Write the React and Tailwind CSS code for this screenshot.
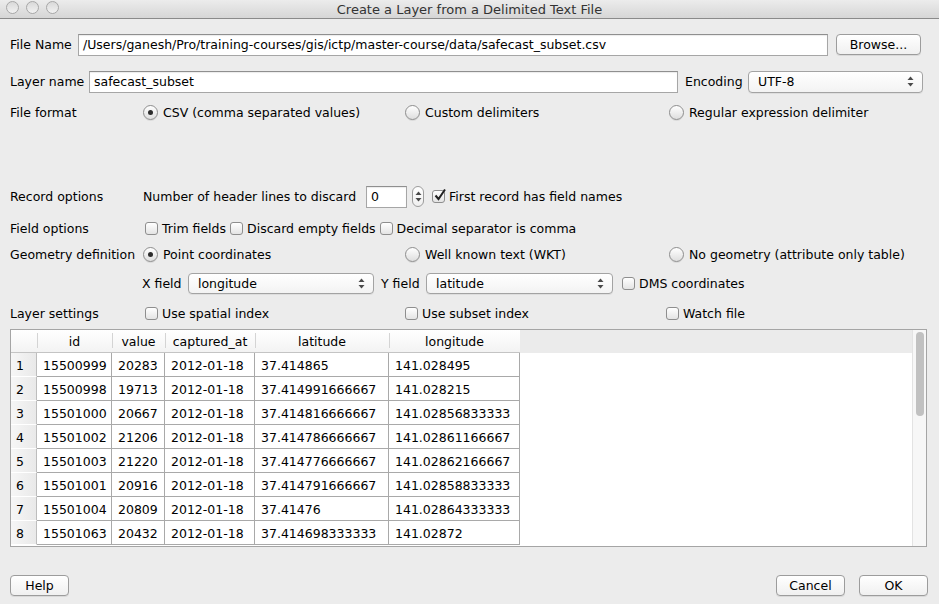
import React from "react";

const rows = [
  ["15500999", "20283", "2012-01-18", "37.414865", "141.028495"],
  ["15500998", "19713", "2012-01-18", "37.414991666667", "141.028215"],
  ["15501000", "20667", "2012-01-18", "37.414816666667", "141.02856833333"],
  ["15501002", "21206", "2012-01-18", "37.414786666667", "141.02861166667"],
  ["15501003", "21220", "2012-01-18", "37.414776666667", "141.02862166667"],
  ["15501001", "20916", "2012-01-18", "37.414791666667", "141.02858833333"],
  ["15501004", "20809", "2012-01-18", "37.41476", "141.02864333333"],
  ["15501063", "20432", "2012-01-18", "37.414698333333", "141.02872"],
];

const cols = [
  { name: "id", w: "w-[75px]" },
  { name: "value", w: "w-[53px]" },
  { name: "captured_at", w: "w-[90px]" },
  { name: "latitude", w: "w-[134px]" },
  { name: "longitude", w: "w-[131px]" },
];

function Radio({ checked, label }) {
  return (
    <div className="flex items-center">
      <span className="w-[15px] h-[15px] rounded-full border border-[#8e8e8e] bg-gradient-to-b from-white to-[#dedede] flex items-center justify-center shadow-[0_1px_0_rgba(0,0,0,0.08)]">
        {checked && <span className="w-[5px] h-[5px] rounded-full bg-[#2b2b2b]"></span>}
      </span>
      <span className="ml-[5px] pt-[2px]">{label}</span>
    </div>
  );
}

function Checkbox({ checked, label, className = "" }) {
  return (
    <div className={"flex items-center " + className}>
      <span className="relative w-[13px] h-[13px] rounded-[3px] border border-[#8e8e8e] bg-gradient-to-b from-white to-[#e4e4e4]">
        {checked && (
          <svg className="absolute -top-[3px] left-[0px]" width="14" height="14" viewBox="0 0 14 14">
            <path d="M2.5 7.5 L5.5 11 L12 1.5" fill="none" stroke="#222" strokeWidth="2" />
          </svg>
        )}
      </span>
      <span className="ml-[4px] pt-[2px]">{label}</span>
    </div>
  );
}

function Arrows() {
  return (
    <svg width="7" height="11" viewBox="0 0 7 11">
      <path d="M3.5 0.5 L6.5 4 L0.5 4 Z" fill="#4a4a4a" />
      <path d="M3.5 10.5 L6.5 7 L0.5 7 Z" fill="#4a4a4a" />
    </svg>
  );
}

function Select({ value, className }) {
  return (
    <div
      className={
        "flex items-center justify-between rounded-[4px] border border-[#a3a3a3] bg-gradient-to-b from-white to-[#f3f3f3] pl-[9px] pr-[8px] shadow-[0_1px_0_rgba(0,0,0,0.06)] " +
        className
      }
    >
      <span className="pt-[2px]">{value}</span>
      <Arrows />
    </div>
  );
}

function Button({ label, className }) {
  return (
    <div
      className={
        "flex items-center justify-center pt-[2px] rounded-[4px] border border-[#9c9c9c] bg-gradient-to-b from-white to-[#f0f0f0] shadow-[0_1px_0_rgba(0,0,0,0.08)] " +
        className
      }
    >
      {label}
    </div>
  );
}

function Input({ value, className }) {
  return (
    <div
      className={
        "flex items-center bg-white border border-[#a6a6a6] border-t-[#8f8f8f] pl-[4px] pt-[2px] shadow-[inset_0_1px_1px_rgba(0,0,0,0.08)] " +
        className
      }
    >
      {value}
    </div>
  );
}

function Label({ className, children }) {
  return <span className={"pt-[2px] " + className}>{children}</span>;
}

export default function App() {
  return (
    <div className="w-[939px] h-[604px] bg-[#ececec] text-[12.5px] text-black overflow-hidden font-['DejaVu_Sans',sans-serif] leading-none">
      {/* title bar */}
      <div className="relative h-[19px] bg-gradient-to-b from-[#ececec] to-[#d6d6d6] border-b border-[#8a8a8a] flex items-center justify-center">
        <div className="absolute left-[6px] top-[1px] flex gap-[7px]">
          {[0, 1, 2].map((i) => (
            <span
              key={i}
              className="w-[13px] h-[13px] rounded-full border border-[#a7a7a7] bg-gradient-to-b from-[#d9d9d9] to-[#f2f2f2]"
            ></span>
          ))}
        </div>
        <span className="text-[13px] text-[#333] pt-[1px]">Create a Layer from a Delimited Text File</span>
      </div>

      <div className="pl-[10px]">
        {/* file name */}
        <div className="flex items-center h-[23px] mt-[14px]">
          <Label className="w-[68px]">File Name</Label>
          <Input value="/Users/ganesh/Pro/training-courses/gis/ictp/master-course/data/safecast_subset.csv" className="w-[750px] h-[22px]" />
          <Button label="Browse..." className="ml-[8px] w-[85px] h-[21px]" />
        </div>

        {/* layer name */}
        <div className="flex items-center h-[23px] mt-[14px]">
          <Label className="w-[79px]">Layer name</Label>
          <Input value="safecast_subset" className="w-[589px] h-[22px]" />
          <Label className="ml-[7px] w-[63px]">Encoding</Label>
          <Select value="UTF-8" className="w-[175px] h-[22px]" />
        </div>

        {/* file format */}
        <div className="flex items-center h-[20px] mt-[9px]">
          <Label className="w-[133px]">File format</Label>
          <div className="w-[262px]">
            <Radio checked label="CSV (comma separated values)" />
          </div>
          <div className="w-[264px]">
            <Radio label="Custom delimiters" />
          </div>
          <Radio label="Regular expression delimiter" />
        </div>

        {/* record options */}
        <div className="flex items-center h-[23px] mt-[63px]">
          <Label className="w-[133px]">Record options</Label>
          <Label className="w-[223px]">Number of header lines to discard</Label>
          <Input value="0" className="w-[41px] h-[22px]" />
          <div className="ml-[5px] w-[12px] h-[21px] rounded-full border border-[#9c9c9c] bg-gradient-to-b from-white to-[#efefef] flex items-center justify-center">
            <Arrows />
          </div>
          <Checkbox checked label="First record has field names" className="ml-[8px]" />
        </div>

        {/* field options */}
        <div className="flex items-center h-[20px] mt-[10px]">
          <Label className="w-[135px]">Field options</Label>
          <Checkbox label="Trim fields" />
          <Checkbox label="Discard empty fields" className="ml-[4px]" />
          <Checkbox label="Decimal separator is comma" className="ml-[4px]" />
        </div>

        {/* geometry definition */}
        <div className="flex items-center h-[20px] mt-[6px]">
          <Label className="w-[133px]">Geometry definition</Label>
          <div className="w-[262px]">
            <Radio checked label="Point coordinates" />
          </div>
          <div className="w-[264px]">
            <Radio label="Well known text (WKT)" />
          </div>
          <Radio label="No geometry (attribute only table)" />
        </div>

        {/* x / y field */}
        <div className="flex items-center h-[21px] mt-[9px]">
          <span className="w-[132px]"></span>
          <Label className="w-[46px]">X field</Label>
          <Select value="longitude" className="w-[186px] h-[21px]" />
          <Label className="ml-[7px] w-[45px]">Y field</Label>
          <Select value="latitude" className="w-[187px] h-[21px]" />
          <Checkbox label="DMS coordinates" className="ml-[9px]" />
        </div>

        {/* layer settings */}
        <div className="flex items-center h-[20px] mt-[9px]">
          <Label className="w-[135px]">Layer settings</Label>
          <div className="w-[260px]">
            <Checkbox label="Use spatial index" />
          </div>
          <div className="w-[261px]">
            <Checkbox label="Use subset index" />
          </div>
          <Checkbox label="Watch file" />
        </div>

        {/* preview table */}
        <div className="mt-[6px] w-[917px] h-[218px] border border-[#a5a5a5] flex bg-white">
          <div className="flex-1 flex flex-col">
            <div className="h-[23px] bg-[#ebebeb] flex">
              <div className="flex bg-gradient-to-b from-white to-[#f3f3f3] border-b border-[#c4c4c4]">
                <div className="w-[26px]"></div>
                {cols.map((c) => (
                  <div key={c.name} className={"relative flex items-center justify-center pt-[2px] " + c.w}>
                    <span className="absolute left-0 top-[3px] h-[15px] border-l border-[#d4d4d4]"></span>
                    {c.name}
                  </div>
                ))}
              </div>
            </div>
            {rows.map((r, i) => (
              <div key={i} className="h-[24px] flex">
                <div className="w-[26px] flex items-center pl-[5px] pt-[3px] bg-gradient-to-r from-[#f6f6f6] to-[#e9e9e9] border-r border-[#bdbdbd] border-b border-b-white">
                  {i + 1}
                </div>
                {r.map((v, j) => (
                  <div
                    key={j}
                    className={"flex items-center pl-[6px] pt-[3px] border-r border-b border-[#a9a9a9] " + cols[j].w}
                  >
                    {v}
                  </div>
                ))}
              </div>
            ))}
          </div>
          <div className="w-[14px] bg-[#f7f7f7] border-l border-[#e3e3e3] pt-[2px] flex justify-center">
            <div className="w-[8px] h-[84px] rounded-full bg-[#c1c1c1]"></div>
          </div>
        </div>

        {/* buttons */}
        <div className="flex items-center h-[21px] mt-[28px] pr-[11px]">
          <Button label="Help" className="w-[59px] h-[21px]" />
          <div className="flex-1"></div>
          <Button label="Cancel" className="w-[69px] h-[21px]" />
          <Button label="OK" className="ml-[14px] w-[69px] h-[21px]" />
        </div>
      </div>
    </div>
  );
}
